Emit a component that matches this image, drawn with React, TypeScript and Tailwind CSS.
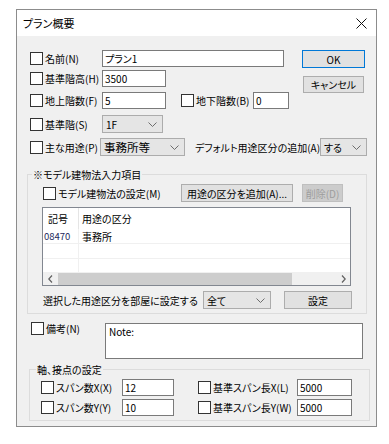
import React from "react";

const font = "font-['Noto_Sans_CJK_JP',sans-serif] [font-feature-settings:'palt']";

function Check() {
  return <span className="inline-block h-[13px] w-[13px] shrink-0 border border-[#333333] bg-white" />;
}

function Chev() {
  return (
    <svg width="9" height="5" viewBox="0 0 9 5" className="shrink-0">
      <path d="M0.5 0.5 L4.5 4.5 L8.5 0.5" fill="none" stroke="#6d6d6d" strokeWidth="1" />
    </svg>
  );
}

function CheckLabel({ text, w }: { text: string; w: string }) {
  return (
    <div className={`flex items-center gap-[2px] ${w}`}>
      <Check />
      <span className="whitespace-nowrap">{text}</span>
    </div>
  );
}

function Edit({ value, w, h = "h-[17px]" }: { value: string; w: string; h?: string }) {
  return (
    <div className={`flex items-center border border-[#7a7a7a] bg-white pl-[2px] text-[10px] ${w} ${h}`}>
      {value}
    </div>
  );
}

function Combo({ value, w, big }: { value: string; w: string; big?: boolean }) {
  return (
    <div className={`flex h-[18px] items-center justify-between border border-[#acacac] bg-[#e5e5e5] pl-[3px] pr-[5px] ${w}`}>
      <span className={big ? "text-[11.5px]" : "text-[10px]"}>{value}</span>
      <Chev />
    </div>
  );
}

function Btn({ text, w, h = "h-[18px]", blue, disabled }: { text: string; w: string; h?: string; blue?: boolean; disabled?: boolean }) {
  return (
    <div
      className={`flex items-center justify-center whitespace-nowrap border ${w} ${h} ${
        blue ? "border-[#0078d7]" : disabled ? "border-[#bfbfbf]" : "border-[#adadad]"
      } ${disabled ? "bg-[#cccccc] text-[#9d9d9d]" : "bg-[#e1e1e1]"}`}
    >
      {text}
    </div>
  );
}

function ScrollArrow({ dir }: { dir: "l" | "r" }) {
  return (
    <div className="flex h-full w-[14px] items-center justify-center">
      <svg width="5" height="8" viewBox="0 0 5 8">
        <path d={dir === "l" ? "M4 0.5 L0.8 4 L4 7.5" : "M1 0.5 L4.2 4 L1 7.5"} fill="none" stroke="#606060" strokeWidth="1.2" />
      </svg>
    </div>
  );
}

export default function App() {
  return (
    <div className={`min-h-[444px] bg-white pl-[16px] pt-[9px] text-[10px] leading-[13px] text-black ${font}`}>
      <div className="flex h-[418px] w-[361px] flex-col border border-[#8c8c8c] bg-[#f0f0f0]">
        {/* title bar */}
        <div className="flex h-[26px] items-center justify-between bg-white pl-[6px] pr-[9px]">
          <span className="text-[11px]">プラン概要</span>
          <svg width="11" height="11" viewBox="0 0 11 11">
            <path d="M0.5 0.5 L10.5 10.5 M10.5 0.5 L0.5 10.5" stroke="#111" strokeWidth="1" />
          </svg>
        </div>

        <div className="flex flex-col pt-[14px]">
          {/* top rows + OK/Cancel */}
          <div className="flex pl-[13px]">
            <div className="flex w-[272px] flex-col">
              <div className="flex items-center">
                <CheckLabel text="名前(N)" w="w-[72px]" />
                <Edit value="プラン1" w="w-[182px]" />
              </div>
              <div className="mt-[3px] flex items-center">
                <CheckLabel text="基準階高(H)" w="w-[72px]" />
                <Edit value="3500" w="w-[64px]" />
              </div>
              <div className="mt-[5px] flex items-center">
                <CheckLabel text="地上階数(F)" w="w-[72px]" />
                <Edit value="5" w="w-[64px]" />
                <div className="ml-[15px]">
                  <CheckLabel text="地下階数(B)" w="w-[72px]" />
                </div>
                <Edit value="0" w="w-[36px]" />
              </div>
            </div>
            <div className="flex flex-col">
              <Btn text="OK" w="w-[63px]" blue />
              <div className="mt-[8px] pl-[1px]">
                <Btn text="キャンセル" w="w-[61px]" h="h-[17px]" />
              </div>
            </div>
          </div>

          <div className="mt-[6px] flex items-center pl-[13px]">
            <CheckLabel text="基準階(S)" w="w-[72px]" />
            <Combo value="1F" w="w-[61px]" />
          </div>
          <div className="mt-[5px] flex items-center pl-[13px]">
            <CheckLabel text="主な用途(P)" w="w-[70px]" />
            <Combo value="事務所等" w="w-[85px]" big />
            <span className="ml-[10px] w-[125px] whitespace-nowrap">デフォルト用途区分の追加(A)</span>
            <Combo value="する" w="w-[47px]" />
          </div>

          {/* model building group */}
          <fieldset className="ml-[10px] mt-[12px] w-[340px] border border-[#dcdcdc] pb-[4px] pl-[15px]">
            <legend className="-ml-[11px] px-[1px]">※モデル建物法入力項目</legend>
            <div className="mt-[3px] flex items-center">
              <CheckLabel text="モデル建物法の設定(M)" w="w-[138px]" />
              <Btn text="用途の区分を追加(A)..." w="w-[112px]" />
              <div className="ml-[9px]">
                <Btn text="削除(D)" w="w-[41px]" disabled />
              </div>
            </div>

            <div className="-ml-[1px] mt-[5px] flex h-[79px] w-[309px] flex-col border border-[#828790] bg-white">
              <div className="flex h-[21px]">
                <div className="flex w-[36px] items-center border-r border-[#e5e5e5] pl-[5px]">記号</div>
                <div className="flex items-center pl-[3px]">用途の区分</div>
              </div>
              <div className="flex h-[15px] border-b border-[#f0f0f0]">
                <div className="flex w-[36px] items-center border-r border-[#f0f0f0] pl-[1px] text-[9.5px] text-[#1c2a5c]">08470</div>
                <div className="flex items-center pl-[3px]">事務所</div>
              </div>
              <div className="flex h-[15px] border-b border-[#f0f0f0]">
                <div className="w-[36px] border-r border-[#f0f0f0]" />
              </div>
              <div className="flex h-[13px]">
                <div className="w-[36px] border-r border-[#f0f0f0]" />
              </div>
              <div className="flex h-[13px] items-center bg-[#f0f0f0]">
                <ScrollArrow dir="l" />
                <div className="ml-[1px] h-[12px] w-[234px] bg-[#cdcdcd]" />
                <div className="flex-1" />
                <ScrollArrow dir="r" />
              </div>
            </div>

            <div className="mt-[5px] flex items-center">
              <span className="w-[160px] whitespace-nowrap">選択した用途区分を部屋に設定する</span>
              <Combo value="全て" w="w-[68px]" />
              <div className="ml-[13px]">
                <Btn text="設定" w="w-[68px]" />
              </div>
            </div>
          </fieldset>

          {/* note */}
          <div className="mt-[9px] flex items-start pl-[14px]">
            <div className="-mt-[1px] w-[74px]">
              <CheckLabel text="備考(N)" w="w-[74px]" />
            </div>
            <div className="h-[36px] w-[258px] border border-[#7a7a7a] bg-white pl-[3px] pt-[1px] text-[10px]">Note:</div>
          </div>

          {/* axis group */}
          <fieldset className="ml-[12px] mt-[4px] w-[341px] border border-[#dcdcdc] pb-[4px] pl-[11px]">
            <legend className="-ml-[5px] px-[1px]">軸、接点の設定</legend>
            <div className="mt-[3px] flex items-center">
              <CheckLabel text="スパン数X(X)" w="w-[81px]" />
              <Edit value="12" w="w-[52px]" />
              <div className="ml-[24px]">
                <CheckLabel text="基準スパン長X(L)" w="w-[99px]" />
              </div>
              <Edit value="5000" w="w-[55px]" />
            </div>
            <div className="mt-[3px] flex items-center">
              <CheckLabel text="スパン数Y(Y)" w="w-[81px]" />
              <Edit value="10" w="w-[52px]" />
              <div className="ml-[24px]">
                <CheckLabel text="基準スパン長Y(W)" w="w-[99px]" />
              </div>
              <Edit value="5000" w="w-[55px]" />
            </div>
          </fieldset>
        </div>
      </div>
    </div>
  );
}
